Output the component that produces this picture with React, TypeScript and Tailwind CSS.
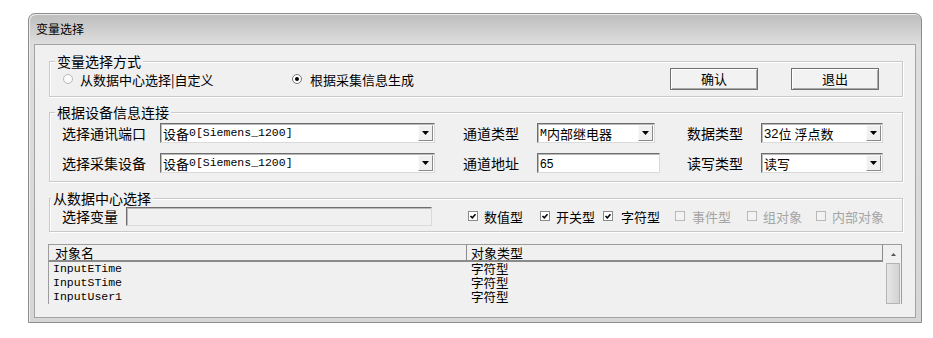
import React from "react";

const cjk = "font-['Noto_Sans_CJK_SC','Liberation_Sans',sans-serif]";
const mono = "font-['Liberation_Mono','Noto_Sans_CJK_SC',monospace]";

const Arrow = () => (
  <svg width="7" height="4" viewBox="0 0 7 4">
    <path d="M0 0H7L3.5 4Z" fill="#000" />
  </svg>
);

const Combo = ({ cls, children }: { cls: string; children: React.ReactNode }) => (
  <div
    className={`h-[20px] flex items-center bg-white border border-t-[#6e6e6e] border-l-[#6e6e6e] border-r-[#dadada] border-b-[#dadada] shadow-[inset_1px_1px_0_#b9b9b9] ${cls}`}
  >
    <div className="pl-[2px] flex items-center text-[13px] leading-none whitespace-nowrap">{children}</div>
    <div className="ml-auto mr-[1px] w-[15px] h-[16px] flex items-center justify-center bg-[#f0f0f0] border border-[#fafafa] border-r-[#8a8a8a] border-b-[#8a8a8a]">
      <Arrow />
    </div>
  </div>
);

const Field = ({ cls, children }: { cls: string; children?: React.ReactNode }) => (
  <div
    className={`flex items-center bg-white border border-t-[#6e6e6e] border-l-[#6e6e6e] border-r-[#dadada] border-b-[#dadada] shadow-[inset_1px_1px_0_#b9b9b9] ${cls}`}
  >
    <div className="pl-[2px] text-[13px] leading-none">{children}</div>
  </div>
);

const Group = ({
  title,
  cls,
  titleCls,
  children,
}: {
  title: string;
  cls: string;
  titleCls: string;
  children: React.ReactNode;
}) => (
  <div className={`relative border border-[#c9c9c9] shadow-[inset_1px_1px_0_#fff,1px_1px_0_#fff] ${cls}`}>
    <span className={`absolute -top-[9px] px-[2px] bg-[#f0f0f0] text-[14px] leading-[16px] ${titleCls}`}>
      {title}
    </span>
    {children}
  </div>
);

const Check = ({
  label,
  on,
  disabled,
  cls,
  gap,
}: {
  label: string;
  on?: boolean;
  disabled?: boolean;
  cls: string;
  gap: string;
}) => (
  <div className={`flex items-center ${cls}`}>
    <span
      className={`w-[10px] h-[10px] border flex items-center justify-center ${
        disabled ? "border-[#b8b8b8] bg-[#f3f3f3]" : "border-[#8a8a8a] bg-white"
      }`}
    >
      {on && (
        <svg width="8" height="8" viewBox="0 0 8 8">
          <path d="M1.5 4L3.3 5.8L6.5 2.2" stroke="#000" strokeWidth="1.5" fill="none" />
        </svg>
      )}
    </span>
    <span className={`${gap} text-[13px] leading-none ${disabled ? "text-[#a5a5a5]" : "text-black"}`}>
      {label}
    </span>
  </div>
);

const Button = ({ label }: { label: string }) => (
  <div className="w-[88px] h-[22px] flex items-center justify-center text-[13px] bg-[#f2f2f2] border border-[#707070] shadow-[inset_1px_1px_0_#fff,inset_-1px_-1px_0_#a8a8a8]">
    {label}
  </div>
);

const rows = [
  ["InputETime", "字符型"],
  ["InputSTime", "字符型"],
  ["InputUser1", "字符型"],
];

export default function App() {
  return (
    <div className={`w-[933px] h-[338px] bg-white overflow-hidden text-black ${cjk}`}>
      <div className="ml-[28px] mt-[13px] w-[894px] h-[310px] rounded-t-[7px] border border-[#8c8c8c] bg-[linear-gradient(to_bottom,#bdbdbd,#dedede_30px,#d6d6d6)] flex flex-col px-[5px] pb-[4px] shadow-[inset_1px_1px_0_#ececec]">
        {/* title bar */}
        <div className="h-[30px] flex items-center pl-[2px] text-[12px] leading-none">变量选择</div>

        {/* client */}
        <div className="flex-1 bg-[#f0f0f0] border border-[#a3a3a3] flex flex-col">
          <Group title="变量选择方式" cls="ml-[14px] mt-[16px] w-[854px] h-[36px] flex items-center" titleCls="left-[5px]">
            <div className="pl-[13px] w-[242px] flex items-center">
              <span className="w-[10px] h-[10px] rounded-full border border-[#b9b9b9] bg-[#fbfbfb]" />
              <span className="ml-[7px] text-[13px] leading-none">从数据中心选择|自定义</span>
            </div>
            <div className="flex items-center">
              <span className="w-[10px] h-[10px] rounded-full border border-[#777] bg-white flex items-center justify-center">
                <span className="w-[4px] h-[4px] rounded-full bg-black" />
              </span>
              <span className="ml-[8px] text-[13px] leading-none">根据采集信息生成</span>
            </div>
            <div className="ml-auto mr-[23px] flex gap-[33px]">
              <Button label="确认" />
              <Button label="退出" />
            </div>
          </Group>

          <Group title="根据设备信息连接" cls="ml-[14px] mt-[15px] w-[854px] h-[70px] pt-[10px] flex flex-col gap-[10px]" titleCls="left-[5px]">
            <div className="pl-[12px] h-[20px] flex items-center text-[14px]">
              <span className="w-[98px]">选择通讯端口</span>
              <Combo cls="w-[275px]">
                设备<span className={`${mono} text-[11.5px]`}>0[Siemens_1200]</span>
              </Combo>
              <span className="ml-[28px] w-[74px]">通道类型</span>
              <div className="w-[150px]">
                <Combo cls="w-[118px]">
                  <span className={`${mono} text-[11.5px]`}>M</span>内部继电器
                </Combo>
              </div>
              <span className="w-[74px]">数据类型</span>
              <Combo cls="w-[122px]">
                <span className="font-['Liberation_Sans',sans-serif]">32</span>位 浮点数
              </Combo>
            </div>
            <div className="pl-[12px] h-[20px] flex items-center text-[14px]">
              <span className="w-[98px]">选择采集设备</span>
              <Combo cls="w-[275px]">
                设备<span className={`${mono} text-[11.5px]`}>0[Siemens_1200]</span>
              </Combo>
              <span className="ml-[28px] w-[74px]">通道地址</span>
              <div className="w-[150px]">
                <Field cls="w-[123px] h-[20px]">
                  <span className="font-['Liberation_Sans',sans-serif] text-[12px]">65</span>
                </Field>
              </div>
              <span className="w-[74px]">读写类型</span>
              <Combo cls="w-[122px]">读写</Combo>
            </div>
          </Group>

          <Group title="从数据中心选择" cls="ml-[14px] mt-[16px] w-[854px] h-[34px] pt-[2px] flex items-center" titleCls="left-[1px]">
            <span className="pl-[12px] w-[76px] text-[14px] leading-none">选择变量</span>
            <Field cls="w-[306px] h-[19px] !bg-[#f0f0f0]" />
            <div className="ml-[36px] flex items-center">
              <Check label="数值型" on cls="w-[72px]" gap="ml-[6px]" />
              <Check label="开关型" on cls="w-[63px]" gap="ml-[6px]" />
              <Check label="字符型" on cls="w-[72px]" gap="ml-[8px]" />
              <Check label="事件型" disabled cls="w-[72px]" gap="ml-[7px]" />
              <Check label="组对象" disabled cls="w-[69px]" gap="ml-[6px]" />
              <Check label="内部对象" disabled cls="" gap="ml-[6px]" />
            </div>
          </Group>

          {/* list */}
          <div className="ml-[13px] mt-[12px] w-[854px] h-[60px] border border-b-0 border-[#9c9c9c] flex">
            <div className="w-[834px] flex flex-col">
              <div className="h-[17px] flex text-[13px] leading-none border-b-2 border-[#8a8a8a]">
                <div className="w-[418px] pl-[6px] flex items-center border-r border-[#8a8a8a]">对象名</div>
                <div className="w-[416px] pl-[4px] flex items-center border-r border-[#8a8a8a]">对象类型</div>
              </div>
              {rows.map(([name, type]) => (
                <div key={name} className="h-[14px] flex items-center">
                  <div className={`w-[418px] pl-[4px] text-[11.5px] leading-none ${mono}`}>{name}</div>
                  <div className="pl-[4px] text-[12.5px] leading-none">{type}</div>
                </div>
              ))}
            </div>
            <div className="ml-[2px] w-[16px] flex flex-col">
              <div className="h-[18px] flex items-center justify-center">
                <svg width="5" height="3" viewBox="0 0 5 3">
                  <path d="M0 3H5L2.5 0Z" fill="#555" />
                </svg>
              </div>
              <div className="flex-1 mx-[1px] border border-[#b4b4b4] bg-[linear-gradient(to_right,#e6e6e6,#d2d2d2)]" />
            </div>
          </div>
        </div>
      </div>
    </div>
  );
}
